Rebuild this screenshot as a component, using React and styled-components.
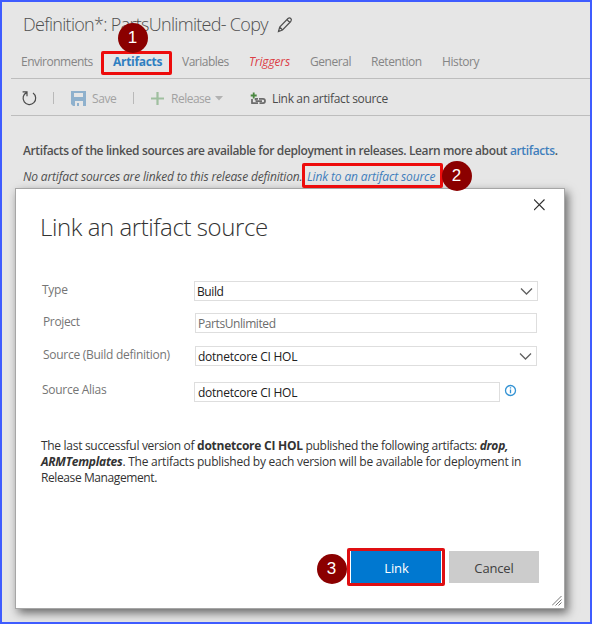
import React from "react";
import styled, { createGlobalStyle } from "styled-components";

const Global = createGlobalStyle`
  * { box-sizing: border-box; }
  body { margin: 0; font-family: "Open Sans", "Noto Sans", sans-serif; font-size: 12px; }
`;

const Frame = styled.div`
  position: relative;
  width: 592px;
  height: 624px;
  overflow: hidden;
  border: 2px solid #3f5cff;
  background: #e6e6e6;
  color: #505050;
`;
const T = styled.span`
  display: inline-block;
  white-space: pre;
  letter-spacing: ${(p) => p.$ls ?? -0.25}px;
`;
const Header = styled.header`
  display: flex;
  height: 43px;
  padding: 9px 0 0 21px;
  line-height: 26px;
  font-size: 18px;
  font-weight: 300;
`;
const HeaderIcon = styled.svg`
  margin: 5px 0 0 9px;
`;
const Tabs = styled.nav`
  display: flex;
  height: 34px;
  margin-left: 9px;
  padding: 8px 0 0 10px;
  border-bottom: 1px solid #bdbdbd;
  line-height: 18px;
`;
const Tab = styled.a`
  flex: 0 0 ${(p) => p.$w}px;
  color: ${(p) => p.$color || "#858585"};
  font-weight: ${(p) => (p.$active ? 700 : 400)};
  font-style: ${(p) => (p.$italic ? "italic" : "normal")};
`;
const Toolbar = styled.div`
  display: flex;
  align-items: center;
  height: 37px;
  margin-left: 9px;
  padding: 2px 0 0 10px;
  border-bottom: 1px solid #bdbdbd;
  color: #a2a2a2;
`;
const Tool = styled.div`
  display: flex;
  align-items: center;
  flex: 0 0 ${(p) => p.$w}px;
  gap: ${(p) => p.$gap || 0}px;
  color: ${(p) => p.$color || "inherit"};
`;
const Divider = styled.div`
  width: 1px;
  height: 12px;
  margin-right: ${(p) => p.$after}px;
  background: #b9b9b9;
`;
const Intro = styled.p`
  margin: 26px 0 0 21px;
  line-height: 18px;
  font-weight: 600;
  white-space: nowrap;
`;
const Empty = styled.p`
  display: flex;
  margin: 8px 0 0 21px;
  line-height: 18px;
  font-style: italic;
`;
const EmptyText = styled.span`
  flex: 0 0 284px;
`;
const Link = styled.a`
  color: #3f7ebc;
`;
const Dialog = styled.section`
  position: absolute;
  left: 13px;
  top: 186px;
  width: 550px;
  height: 421px;
  padding: 0 25px 0 25px;
  border: 1px solid #a6a6a6;
  background: #fff;
  box-shadow: 3px 4px 9px rgba(0, 0, 0, 0.55);
  color: #333;
`;
const DialogHead = styled.div`
  display: flex;
  justify-content: space-between;
  height: 92px;
  padding-top: 21px;
`;
const DialogTitle = styled.h1`
  margin: 0 0 0 -1px;
  line-height: 34px;
  font-size: 24px;
  font-weight: 300;
`;
const Close = styled.svg`
  margin: -17px -7px 0 0;
`;
const Field = styled.div`
  display: flex;
  align-items: flex-start;
  height: ${(p) => p.$h}px;
  padding-left: ${(p) => p.$inset || 0}px;
`;
const Label = styled.label`
  flex: 0 0 153px;
  margin-top: ${(p) => p.$shift || 0}px;
  padding-left: 1px;
  line-height: 18px;
  color: #757575;
`;
const Box = styled.div`
  display: flex;
  justify-content: space-between;
  width: ${(p) => p.$w}px;
  height: 20px;
  padding: 1px 4px 0 ${(p) => p.$left || 2}px;
  border: 1px solid #dedede;
  line-height: 18px;
  color: ${(p) => p.$color || "#202020"};
`;
const Chevron = styled.svg`
  margin-top: 3px;
`;
const Info = styled.svg`
  margin: 2px 0 0 4px;
`;
const Summary = styled.p`
  height: 110px;
  margin: 0;
  line-height: 16px;
`;
const Line = styled.span`
  display: block;
  white-space: pre;
`;
const Actions = styled.div`
  display: flex;
  align-items: flex-start;
  justify-content: flex-end;
  gap: 4px;
`;
const Button = styled.button`
  width: 90px;
  height: 32px;
  margin: 3px 0 0;
  padding: 2px 0 0;
  border: 0;
  background: #cccccc;
  color: #404040;
  font: 13px/18px "Open Sans", sans-serif;
`;
const PrimaryRing = styled.div`
  width: 98px;
  height: 38px;
  padding: 0 1px;
  border: 3px solid #df0f12;
  border-radius: 2px;
  background: #fff;
  ${Button} {
    width: 90px;
    margin: 0;
    padding-left: 1px;
    background: #0078d0;
    color: #fff;
    font-weight: 500;
  }
`;
const Grip = styled.svg`
  position: absolute;
  right: 2px;
  bottom: 2px;
`;
const Callout = styled.div`
  position: absolute;
  left: ${(p) => p.$x}px;
  top: ${(p) => p.$y}px;
  width: ${(p) => p.$w}px;
  height: ${(p) => p.$h}px;
  border: 3px solid #ed0c0c;
  border-radius: 2px;
`;
const Badge = styled.div`
  position: absolute;
  left: ${(p) => p.$x}px;
  top: ${(p) => p.$y}px;
  display: grid;
  place-items: center;
  width: 30px;
  height: 30px;
  border-radius: 50%;
  background: #8b0000;
  color: #fff;
  font: 17px/20px "Liberation Sans", Arial, sans-serif;
`;

const ChevronIcon = () => (
  <Chevron width="13" height="11" viewBox="0 0 13 11" fill="none" stroke="#606060" strokeWidth="1.3">
    <path d="M1 2.5 6.5 8 12 2.5" />
  </Chevron>
);

export default function App() {
  return (
    <Frame>
      <Global />
      <Header>
        <T $ls={-0.7}>Definition*: PartsUnlimited- Copy</T>
        <HeaderIcon width="16" height="18" viewBox="0 0 16 18" fill="none" stroke="#505050" strokeWidth="1.2">
          <path d="M1.5 15.5 2.7 11 11 2.5Q12.5 1.2 13.8 2.5T13.7 5.5L5.5 14ZM10 3.7 12.7 6.5M2.7 11 5.5 14" />
        </HeaderIcon>
      </Header>
      <Tabs>
        <Tab $w={92}><T $ls={-0.5}>Environments</T></Tab>
        <Tab $w={69} $active $color="#2f7fc1"><T $ls={-0.3}>Artifacts</T></Tab>
        <Tab $w={67}><T $ls={-0.5}>Variables</T></Tab>
        <Tab $w={61} $italic $color="#dc3e46"><T $ls={-0.15}>Triggers</T></Tab>
        <Tab $w={61}><T $ls={-0.45}>General</T></Tab>
        <Tab $w={71}><T $ls={-0.4}>Retention</T></Tab>
        <Tab $w={50}><T $ls={-0.4}>History</T></Tab>
      </Tabs>
      <Toolbar>
        <Tool $w={32}>
          <svg width="17" height="18" viewBox="0 0 17 18" fill="none" stroke="#4a4a4a" strokeWidth="1.2">
            <path d="M5.6 3.6A6.3 6.3 0 1 0 12 4.1M1.6 2.8H6V7.2" />
          </svg>
        </Tool>
        <Divider $after={17} />
        <Tool $w={62} $gap={6}>
          <svg width="15" height="15" viewBox="0 0 15 15">
            <path fill="#8fb1cd" fillRule="evenodd" d="M0 0H15V15H12V10H4V15H2L0 13ZM3 2V6H12V2Z" />
            <path fill="#8fb1cd" d="M6 12H8V15H6Z" />
          </svg>
          <T $ls={-0.4}>Save</T>
        </Tool>
        <Divider $after={17} />
        <Tool $w={99} $gap={7}>
          <svg width="13" height="13" viewBox="0 0 13 13" stroke="#9fbf9f" strokeWidth="2.2">
            <path d="M6.5 0V13M0 6.5H13" />
          </svg>
          <Tool $gap={4}>
            <T $ls={-0.5}>Release</T>
            <svg width="8" height="5" viewBox="0 0 8 5"><path fill="#b2b2b2" d="M0 0H8L4 4.5Z" /></svg>
          </Tool>
        </Tool>
        <Tool $gap={6} $color="#4c4c4c">
          <svg width="16" height="13" viewBox="0 0 16 13" fill="none">
            <path stroke="#4a8840" strokeWidth="1.8" d="M3.7 .5V6.5M.7 3.5H6.7" />
            <path stroke="#6c6c6c" strokeWidth="1.8" strokeLinejoin="round" d="M2 7V11.2H8M8 6.9H5.6V8.2M9 6.9H13Q15 6.9 15 9T13 11.2H9.5M5.6 9.2H12" />
          </svg>
          <T $ls={-0.34}>Link an artifact source</T>
        </Tool>
      </Toolbar>
      <Intro>
        <T $ls={-0.38}>Artifacts of the linked sources are available for deployment in releases. Learn more about <Link>artifacts</Link>.</T>
      </Intro>
      <Empty>
        <EmptyText><T $ls={-0.16}>No artifact sources are linked to this release definition.</T></EmptyText>
        <Link><T $ls={-0.14}>Link to an artifact source</T></Link>
      </Empty>

      <Dialog>
        <DialogHead>
          <DialogTitle><T $ls={-0.42}>Link an artifact source</T></DialogTitle>
          <Close width="12" height="50" viewBox="0 0 12 50" stroke="#303030" strokeWidth="1.1">
            <path d="M-.5 6.5 10 17M10 6.5 -.5 17" transform="translate(.5)" />
          </Close>
        </DialogHead>
        <Field $h={32}>
          <Label><T>Type</T></Label>
          <Box $w={344}><T $ls={-0.4}>Build</T><ChevronIcon /></Box>
        </Field>
        <Field $h={33} $inset={1}>
          <Label><T $ls={-0.35}>Project</T></Label>
          <Box $w={342} $color="#6c6c6c"><T $ls={-0.42}>PartsUnlimited</T></Box>
        </Field>
        <Field $h={36} $inset={1}>
          <Label><T $ls={-0.28}>Source (Build definition)</T></Label>
          <Box $w={342}><T>dotnetcore CI HOL</T><ChevronIcon /></Box>
        </Field>
        <Field $h={56}>
          <Label $shift={-1}><T $ls={-0.28}>Source Alias</T></Label>
          <Box $w={306} $left={3}><T>dotnetcore CI HOL</T></Box>
          <Info width="13" height="13" viewBox="0 0 13 13" fill="none" stroke="#3493d4" strokeWidth="1.3">
            <circle cx="6.5" cy="6.5" r="5" /><path d="M6.5 5.5V9.2M6.5 3.3V4.5" />
          </Info>
        </Field>
        <Summary>
          <Line><T $ls={-0.3}>The last successful version of </T><T><b>dotnetcore CI HOL</b></T><T $ls={-0.32}> published the following artifacts: </T><T><b><i>drop,</i></b></T></Line>
          <Line><T><b><i>ARMTemplates</i></b></T><T>. The artifacts published by each version will be available for deployment in</T></Line>
          <Line><T $ls={-0.4}>Release Management.</T></Line>
        </Summary>
        <Actions>
          <PrimaryRing><Button><T $ls={-0.1}>Link</T></Button></PrimaryRing>
          <Button><T $ls={-0.15}>Cancel</T></Button>
        </Actions>
        <Grip width="10" height="10" viewBox="0 0 10 10" stroke="#777" strokeWidth="1">
          <path d="M0 9.5 9.5 0M3.5 9.5 9.5 3.5M6.5 9.5 9.5 6.5" />
        </Grip>
      </Dialog>

      <Callout $x={99} $y={49} $w={71} $h={24} />
      <Callout $x={300} $y={161} $w={141} $h={25} />
      <Badge $x={115.5} $y={20.5}>1</Badge>
      <Badge $x={439.5} $y={158.5}>2</Badge>
      <Badge $x={314.5} $y={551.5}>3</Badge>
    </Frame>
  );
}
